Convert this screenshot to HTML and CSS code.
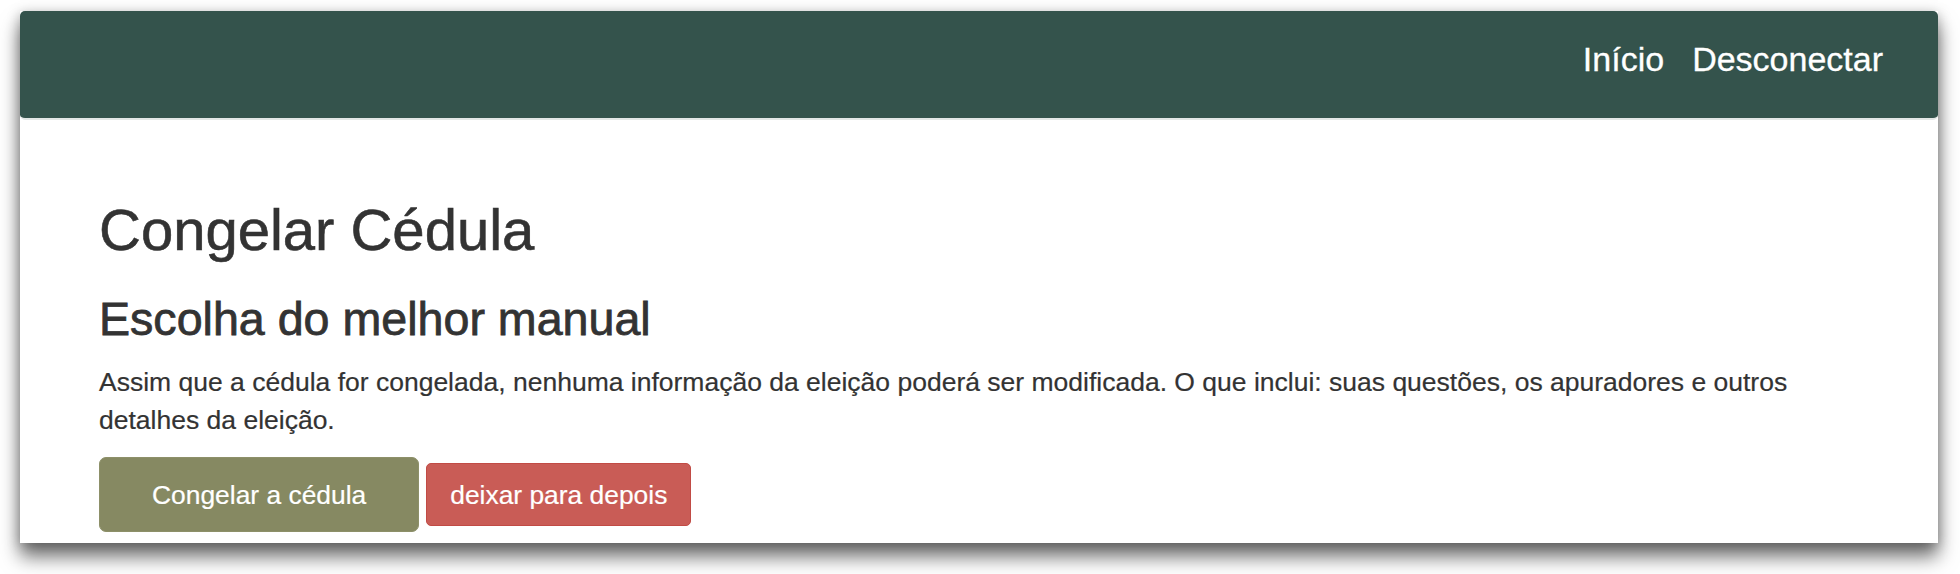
FILE: index.html
```html
<!DOCTYPE html>
<html lang="pt-BR">
<head>
<meta charset="utf-8">
<title>Congelar Cédula</title>
<link rel="stylesheet" href="styles.css">
</head>
<body>
<div class="window">
  <nav class="navbar">
    <ul class="nav-links">
      <li><a href="#" class="nav-link">Início</a></li>
      <li><a href="#" class="nav-link">Desconectar</a></li>
    </ul>
  </nav>
  <main class="content">
    <h1 class="title">Congelar Cédula</h1>
    <h2 class="subtitle">Escolha do melhor manual</h2>
    <p class="lead-text">Assim que a cédula for congelada, nenhuma informação da eleição poderá ser modificada. O que inclui: suas questões, os apuradores e outros detalhes da eleição.</p>
    <div class="actions">
      <button class="btn btn-freeze">Congelar a cédula</button>
      <button class="btn btn-later">deixar para depois</button>
    </div>
  </main>
</div>
</body>
</html>
```
FILE: styles.css
```css
html, body {
  margin: 0;
  padding: 0;
  background: #ffffff;
  height: 100%;
}

body {
  font-family: "Liberation Sans", Arial, sans-serif;
  color: #333333;
  padding-top: 11px;
  box-sizing: border-box;
}

.window {
  box-sizing: border-box;
  margin: 0 22px 0 20px;
  width: 1918px;
  height: 532px;
  background: #ffffff;
  overflow: hidden;
  box-shadow: 0 14px 18px rgba(0, 0, 0, 0.55), 0 2px 12px rgba(0, 0, 0, 0.25);
}

.navbar {
  box-sizing: border-box;
  height: 109px;
  background: #34534c;
  border-radius: 5px;
  border-bottom: 2px solid #e3e7e6;
  padding: 28px 41px 0 0;
  display: flex;
  justify-content: flex-end;
  align-items: flex-start;
}

.nav-links {
  list-style: none;
  margin: 0;
  padding: 0;
  display: flex;
}

.nav-link {
  display: block;
  padding: 0 14px;
  font-size: 34px;
  line-height: 40px;
  color: #ffffff;
  text-decoration: none;
  -webkit-text-stroke: 0.3px #ffffff;
}

.content {
  padding: 78px 79px 0 79px;
}

.title {
  margin: 0 0 32px 0;
  font-size: 58px;
  line-height: 1.1;
  font-weight: 400;
  color: #333333;
  -webkit-text-stroke: 0.6px #333333;
}

.subtitle {
  margin: 0 0 18px 0;
  font-size: 46.6px;
  line-height: 1.1;
  font-weight: 400;
  color: #333333;
  -webkit-text-stroke: 0.8px #333333;
}

.lead-text {
  margin: 0 0 18px 0;
  font-size: 26.5px;
  line-height: 38px;
  -webkit-text-stroke: 0.2px #333333;
}

.actions {
  display: flex;
  align-items: center;
  gap: 7px;
}

.btn {
  font-family: "Liberation Sans", Arial, sans-serif;
  font-size: 26.4px;
  line-height: 38px;
  color: #ffffff;
  cursor: pointer;
  margin: 0;
  -webkit-text-stroke: 0.2px #ffffff;
}

.btn-freeze {
  background: #868962;
  border: 1px solid #8d9069;
  border-radius: 7px;
  padding: 17.5px 52px;
}

.btn-later {
  background: #c95c56;
  border: 1px solid #c14b45;
  border-radius: 5px;
  padding: 11.5px 23px;
}
```
